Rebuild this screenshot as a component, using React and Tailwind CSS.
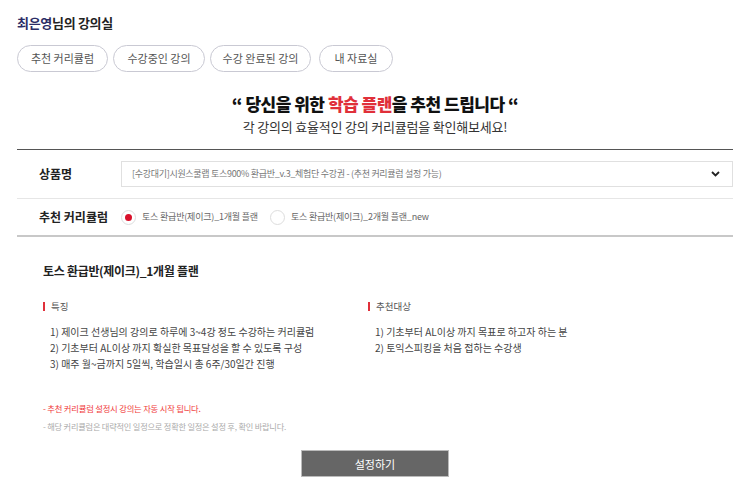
import React from "react";

const tabs = [
  { label: "추천 커리큘럼", w: "w-[91px]" },
  { label: "수강중인 강의", w: "w-[92px]" },
  { label: "수강 완료된 강의", w: "w-[101px]" },
  { label: "내 자료실", w: "w-[74px] ml-[3px]" },
];

const features = [
  "1) 제이크 선생님의 강의로 하루에 3~4강 정도 수강하는 커리큘럼",
  "2) 기초부터 AL이상 까지 확실한 목표달성을 할 수 있도록 구성",
  "3) 매주 월~금까지 5일씩, 학습일시 총 6주/30일간 진행",
];

const targets = ["1) 기초부터 AL이상 까지 목표로 하고자 하는 분", "2) 토익스피킹을 처음 접하는 수강생"];

const Radio = ({ checked, label }) => (
  <label className="flex items-center gap-[6px]">
    <span className="w-[15px] h-[15px] rounded-full border border-[#ddd] bg-white flex items-center justify-center">
      {checked && <span className="w-[7px] h-[7px] rounded-full bg-[#d8102a]" />}
    </span>
    <span className="text-[9px] text-[#666] tracking-[-0.2px]">{label}</span>
  </label>
);

const Section = ({ title, items, className }) => (
  <div className={className}>
    <div className="flex items-center gap-[6px]">
      <span className="w-[2px] h-[9px] bg-[#e0303a]" />
      <span className="text-[9.5px] text-[#555]">{title}</span>
    </div>
    <ul className="mt-[11px] pl-[7px] text-[10px] leading-[16px] text-[#444]">
      {items.map((f) => (
        <li key={f}>{f}</li>
      ))}
    </ul>
  </div>
);

export default function App() {
  return (
    <div className="w-[743px] h-[490px] bg-white pl-[17px] pr-[10px] pt-[13px] font-['Noto_Sans_CJK_KR','Noto_Sans',sans-serif] text-[#222]">
      {/* Header */}
      <h2 className="text-[13px] font-bold leading-[20px] tracking-[-0.3px]">
        <span className="text-[#2b2d66]">최은영</span>님의 강의실
      </h2>
      <div className="flex gap-[5px] mt-[12px]">
        {tabs.map((t) => (
          <button key={t.label} className={`h-[27px] rounded-full border border-[#c9c9d3] text-[11px] text-[#555] ${t.w}`}>
            {t.label}
          </button>
        ))}
      </div>

      {/* Headline */}
      <div className="text-center mt-[20px]">
        <p className="text-[17px] font-black leading-[24px] tracking-[-0.5px] text-[#111]">
          “ 당신을 위한 <span className="text-[#e0303a]">학습 플랜</span>을 추천 드립니다 “
        </p>
        <p className="text-[13px] leading-[20px] text-[#333] mt-[1px] tracking-[-0.2px]">
          각 강의의 효율적인 강의 커리큘럼을 확인해보세요!
        </p>
      </div>

      {/* Form */}
      <div className="mt-[12px] border-t border-[#555]">
        <div className="flex items-center h-[49px] border-b border-[#e6e6e6]">
          <div className="w-[104px] pl-[22px] text-[12px] font-bold">상품명</div>
          <div className="flex-1 h-[26px] border border-[#e0e0e0] flex items-center justify-between pl-[10px] pr-[12px]">
            <span className="text-[9px] text-[#777] tracking-[-0.3px]">
              [수강대기]시원스쿨랩 토스900% 환급반_v.3_체험단 수강권 - (추천 커리큘럼 설정 가능)
            </span>
            <svg width="9" height="6" viewBox="0 0 9 6">
              <path d="M1 1l3.5 3.5L8 1" fill="none" stroke="#222" strokeWidth="1.8" />
            </svg>
          </div>
        </div>
        <div className="flex items-center h-[38px] border-b-2 border-[#c8c8c8]">
          <div className="w-[104px] pl-[22px] text-[12px] font-bold">추천 커리큘럼</div>
          <div className="flex gap-[12px]">
            <Radio checked label="토스 환급반(제이크)_1개월 플랜" />
            <Radio label="토스 환급반(제이크)_2개월 플랜_new" />
          </div>
        </div>
      </div>

      {/* Plan detail */}
      <div className="px-[26px]">
        <h3 className="mt-[25px] text-[12px] font-bold leading-[18px] tracking-[-0.3px]">토스 환급반(제이크)_1개월 플랜</h3>
        <div className="flex mt-[19px]">
          <Section className="w-[325px]" title="특징" items={features} />
          <Section title="추천대상" items={targets} />
        </div>

        <p className="mt-[30px] text-[8.3px] leading-[12px] text-[#f03a3a] tracking-[-0.2px]">
          - 추천 커리큘럼 설정시 강의는 자동 시작 됩니다.
        </p>
        <p className="mt-[6px] text-[8.2px] leading-[12px] text-[#aaa] tracking-[-0.2px]">
          - 해당 커리큘럼은 대략적인 일정으로 정확한 일정은 설정 후, 확인 바랍니다.
        </p>
      </div>

      <div className="flex justify-center mt-[18px]">
        <button className="w-[148px] h-[27px] bg-[#666] text-white text-[11px] border border-[#bbb]">설정하기</button>
      </div>
    </div>
  );
}
